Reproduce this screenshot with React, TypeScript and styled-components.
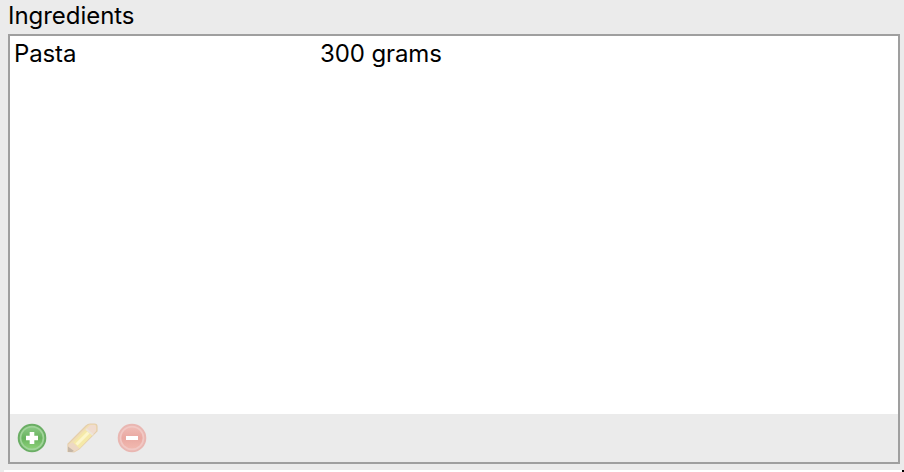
import React from "react";
import styled, { createGlobalStyle } from "styled-components";

const GlobalStyle = createGlobalStyle`
  html, body { margin: 0; padding: 0; background: #ebebeb; overflow: hidden; }
  * { box-sizing: border-box; }
`;

const Page = styled.main`
  display: flex;
  flex-direction: column;
  width: 904px;
  height: 472px;
  background: #ebebeb;
  color: #000;
  font-family: Inter, "Liberation Sans", sans-serif;
  font-size: 24px;
  font-weight: 430;
  line-height: 30px;
`;

const Label = styled.label`
  height: 34px;
  padding: 1px 8px 0;
  letter-spacing: -0.04px;
`;

const Panel = styled.section`
  display: flex;
  flex-direction: column;
  height: 430px;
  margin: 0 4px 0 8px;
  border: 2px solid #9f9f9f;
`;

const List = styled.div`
  flex: 1;
  padding-top: 3px;
  background: #fff;
`;

const Row = styled.div`
  display: grid;
  grid-template-columns: 306px 1fr;
  padding-left: 4px;
  letter-spacing: -0.12px;
`;

const Cell = styled.span`
  white-space: nowrap;
`;

const Toolbar = styled.div`
  display: flex;
  align-items: center;
  gap: 18px;
  height: 48px;
  padding-left: 6px;
`;

const ToolButton = styled.button`
  display: block;
  width: 32px;
  height: 32px;
  padding: 0;
  border: 0;
  background: none;
  svg { display: block; overflow: visible; }
`;

const BottomEdge = styled.footer`
  display: flex;
  justify-content: flex-end;
  height: 2px;
  margin: 6px 0 0 4px;
  background: #fff;
`;

const Corner = styled.span`
  width: 2px;
  height: 2px;
  background: #000;
`;

function AddIcon() {
  return (
    <svg width="32" height="32" viewBox="0 0 32 32">
      <defs>
        <linearGradient id="add" x1="0" y1="0" x2="0" y2="1">
          <stop offset="0" stopColor="#8bc985" />
          <stop offset=".5" stopColor="#68b35e" />
          <stop offset="1" stopColor="#8bd077" />
        </linearGradient>
      </defs>
      <circle cx="16" cy="16" r="13.3" fill="#a0d499" stroke="#6bae65" strokeWidth="2" />
      <circle cx="16" cy="16" r="10.6" fill="url(#add)" />
      <path d="M13.7 10h4.6v3.7H22v4.6h-3.7V22h-4.6v-3.7H10v-4.6h3.7z" fill="#fff" />
    </svg>
  );
}

function EditIcon() {
  return (
    <svg width="32" height="32" viewBox="0 0 32 32">
      <path d="M2 29.5V22L20 4Q22 2 24 2h4.500q2.500 0 2.500 2.500V9L13 27l-5 3z" fill="#f1dfb2" stroke="#e5cead" strokeWidth="1.2" />
      <path d="M7.500 20.500 19.500 8l6.500 5.500-12.500 13z" fill="#f5e9a8" />
      <path d="m10.500 22.500 12-12" stroke="#fcf6cb" strokeWidth="3" />
      <path d="m20.500 6.500 4-3.500H29l1 1.500V9l-3.500 4z" fill="#f0dccf" />
      <path d="m20 7 7 6" stroke="#ede5da" strokeWidth="2" />
      <path d="m2.500 22.500 4-2 7 6L8 29.500H2.500z" fill="#edd8c4" />
      <path d="m2 24.500 6 4.500-2 1H2z" fill="#c5b6a6" />
    </svg>
  );
}

function RemoveIcon() {
  return (
    <svg width="32" height="32" viewBox="0 0 32 32">
      <defs>
        <linearGradient id="remove" x1="0" y1="0" x2="0" y2="1">
          <stop offset="0" stopColor="#efbbb5" />
          <stop offset=".5" stopColor="#eaa9a2" />
          <stop offset="1" stopColor="#f1b8af" />
        </linearGradient>
      </defs>
      <circle cx="16" cy="16" r="13.3" fill="#f1c8c4" stroke="#e9b7b2" strokeWidth="2" />
      <circle cx="16" cy="16" r="10.6" fill="url(#remove)" />
      <path d="M10 14h12v4H10z" fill="#fff" />
    </svg>
  );
}

export default function App() {
  return (
    <>
      <GlobalStyle />
      <Page>
        <Label>Ingredients</Label>
        <Panel>
          <List>
            <Row>
              <Cell>Pasta</Cell>
              <Cell>300 grams</Cell>
            </Row>
          </List>
          <Toolbar>
            <ToolButton aria-label="Add"><AddIcon /></ToolButton>
            <ToolButton aria-label="Edit" disabled><EditIcon /></ToolButton>
            <ToolButton aria-label="Remove" disabled><RemoveIcon /></ToolButton>
          </Toolbar>
        </Panel>
        <BottomEdge><Corner /></BottomEdge>
      </Page>
    </>
  );
}
